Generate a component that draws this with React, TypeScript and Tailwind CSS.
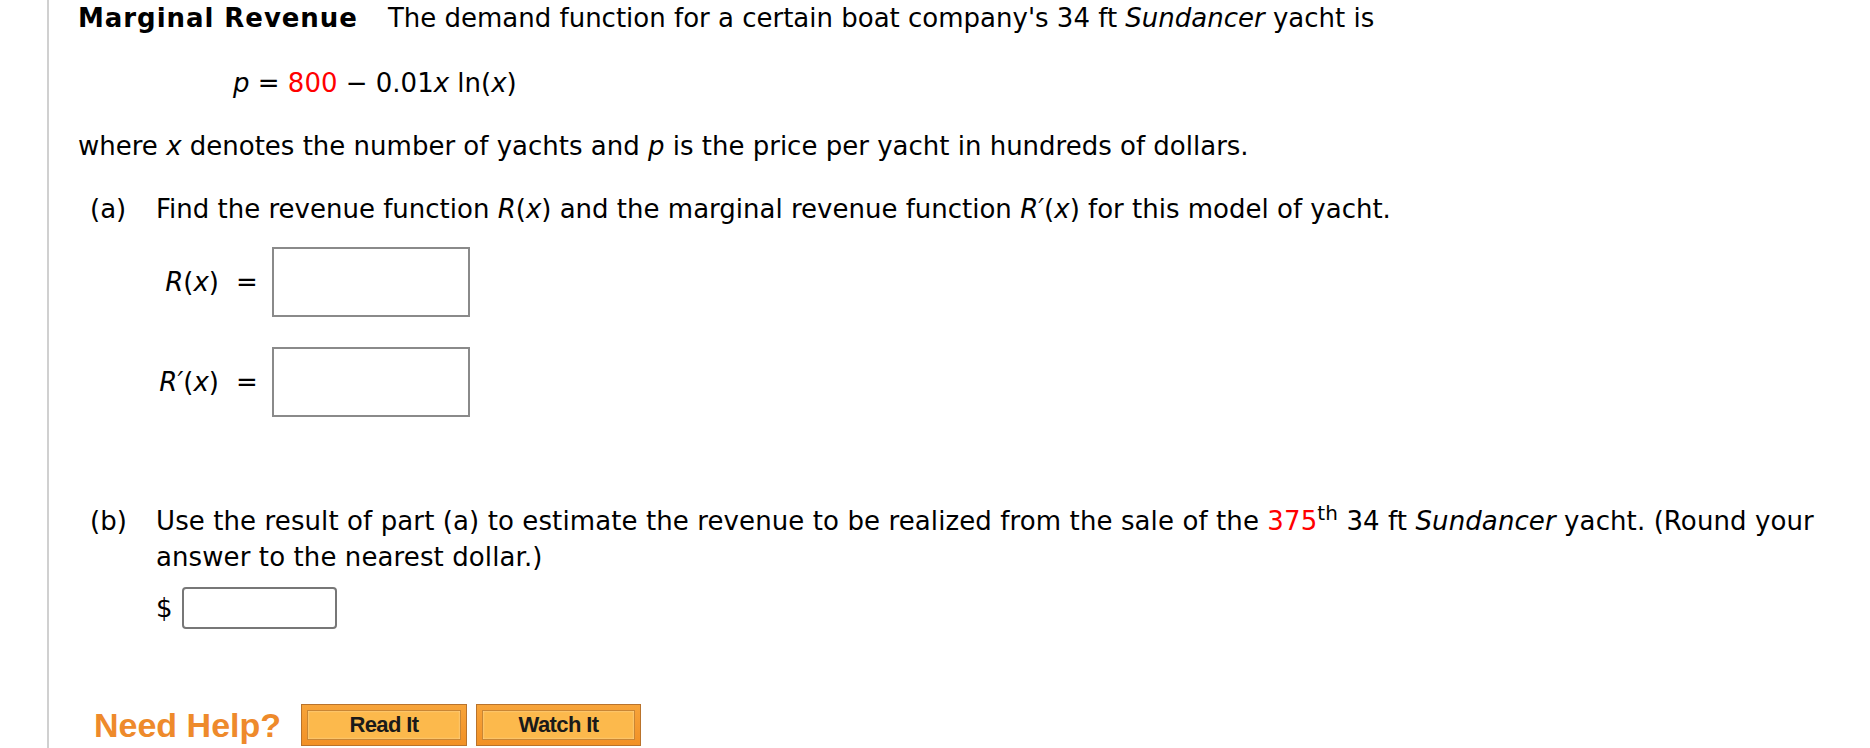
import React from "react";

const font = { fontFamily: '"DejaVu Sans", Verdana, sans-serif' };

function HelpButton({ label, w }: { label: string; w: string }) {
  return (
    <div
      className={`${w} h-[42px] border border-[#b9732c] bg-gradient-to-b from-[#f7a43a] to-[#f29126] p-[5px]`}
    >
      <div className="h-full w-full border border-[#c98634] bg-[#fcb94c] flex items-center justify-center shadow-[inset_0_0_2px_rgba(255,255,255,0.6)]">
        <span
          className="text-[22px] font-bold text-[#1a1a1a] tracking-[-0.6px]"
          style={{ fontFamily: '"Liberation Sans", Arial, sans-serif' }}
        >
          {label}
        </span>
      </div>
    </div>
  );
}

export default function App() {
  return (
    <div className="w-[1870px] h-[748px] bg-white overflow-hidden text-black" style={font}>
      <div className="ml-[47px] h-full border-l-2 border-[#d0d0d0] pl-[29px] text-[26px] leading-[36px]">
        {/* Title line */}
        <div className="flex items-baseline whitespace-nowrap">
          <span className="font-bold tracking-[0.95px]">Marginal Revenue</span>
          <span className="ml-[30px]">
            The demand function for a certain boat company's 34 ft <i>Sundancer</i> yacht is
          </span>
        </div>

        {/* Formula */}
        <div className="mt-[29px] pl-[155px] whitespace-nowrap">
          <i>p</i> = <span className="text-[#ff0000]">800</span> − 0.01<i>x</i> ln(<i>x</i>)
        </div>

        {/* where line */}
        <div className="mt-[27px] whitespace-nowrap">
          where <i>x</i> denotes the number of yachts and <i>p</i> is the price per yacht in hundreds of dollars.
        </div>

        {/* Part (a) */}
        <div className="mt-[27px] flex pl-[12px] whitespace-nowrap">
          <div className="w-[66px] shrink-0">(a)</div>
          <div>
            Find the revenue function <i>R</i>(<i>x</i>) and the marginal revenue function <i>R′</i>(<i>x</i>) for this model of yacht.
          </div>
        </div>

        <div className="mt-[20px] flex items-center">
          <div className="w-[141px] text-right whitespace-nowrap">
            <i>R</i>(<i>x</i>)
          </div>
          <div className="ml-[17px] w-[17px]">=</div>
          <div className="ml-[19px] w-[198px] h-[70px] border-2 border-[#8a8a8a] bg-white" />
        </div>

        <div className="mt-[30px] flex items-center">
          <div className="w-[141px] text-right whitespace-nowrap">
            <i>R′</i>(<i>x</i>)
          </div>
          <div className="ml-[17px] w-[17px]">=</div>
          <div className="ml-[19px] w-[198px] h-[70px] border-2 border-[#8a8a8a] bg-white" />
        </div>

        {/* Part (b) */}
        <div className="mt-[86px] flex pl-[12px]">
          <div className="w-[66px] shrink-0">(b)</div>
          <div className="w-[1712px]">
            <div className="tracking-[0.1px]">
              Use the result of part (a) to estimate the revenue to be realized from the sale of the{" "}
              <span className="text-[#ff0000]">375</span>
              <sup className="text-[20px] leading-none">th</sup> 34 ft <i>Sundancer</i> yacht. (Round your answer to the nearest dollar.)
            </div>
            <div className="mt-[12px] flex items-center">
              <span className="w-[26px]">$</span>
              <div className="w-[155px] h-[42px] border-2 border-[#777] rounded-[4px] bg-white" />
            </div>
          </div>
        </div>

        {/* Need Help */}
        <div className="mt-[75px] flex items-center pl-[16px]">
          <span
            className="w-[207px] shrink-0 text-[34px] font-bold text-[#ee8a2b] leading-[42px] tracking-[0px]"
            style={{ fontFamily: '"Liberation Sans", Arial, sans-serif' }}
          >
            Need Help?
          </span>
          <div className="flex gap-[9px]">
            <HelpButton label="Read It" w="w-[166px]" />
            <HelpButton label="Watch It" w="w-[165px]" />
          </div>
        </div>
      </div>
    </div>
  );
}
